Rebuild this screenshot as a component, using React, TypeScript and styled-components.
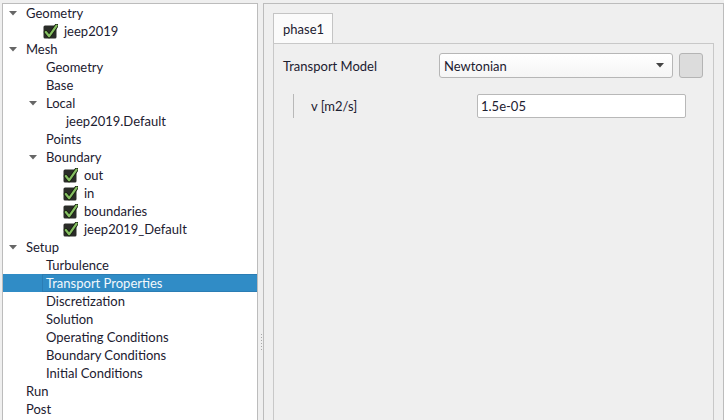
import React from "react";
import styled, { createGlobalStyle } from "styled-components";

const GlobalStyle = createGlobalStyle`
  html, body {
    margin: 0;
    padding: 0;
    background: #efefef;
    overflow: hidden;
  }
  body {
    font-family: Lato, "Noto Sans", "DejaVu Sans", sans-serif;
    font-size: 13px;
    color: #1c2030;
  }
`;

const Window = styled.div`
  display: flex;
  width: 724px;
  height: 420px;
  overflow: hidden;
`;

const TreePanel = styled.div`
  width: 256px;
  height: 430px;
  margin: 3px 0 0 2px;
  box-sizing: border-box;
  border: 1px solid #bcbcbc;
  background: #ffffff;
  flex-shrink: 0;
`;

const Row = styled.div<{ $level: number; $selected?: boolean }>`
  display: flex;
  align-items: center;
  height: 18px;
  padding-left: ${(p) => p.$level * 20}px;
  background: ${(p) => (p.$selected ? "#308cc6" : "transparent")};
  color: ${(p) => (p.$selected ? "#f2f8fc" : "inherit")};
  white-space: nowrap;
`;

const ArrowCell = styled.div`
  width: 20px;
  height: 18px;
  display: flex;
  align-items: center;
  justify-content: center;
  flex-shrink: 0;
`;

const ItemCell = styled.div<{ $selected?: boolean; $check?: boolean }>`
  flex: 1;
  height: 18px;
  box-sizing: border-box;
  display: flex;
  align-items: center;
  padding-left: ${(p) => (p.$check ? 0 : 3)}px;
  border: 1px solid ${(p) => (p.$selected ? "#2b7db4" : "transparent")};
  border-right: none;
  margin-left: -1px;
`;

const CheckBox = styled.span`
  display: inline-flex;
  width: 15px;
  height: 15px;
  margin: 0 6px 0 0;
`;

const Splitter = styled.div`
  width: 5px;
  flex-shrink: 0;
  display: flex;
  flex-direction: column;
  align-items: center;
  gap: 2px;
  padding-top: 334px;
  box-sizing: border-box;
`;

const Dot = styled.span`
  width: 1px;
  height: 1px;
  background: #a8a8a8;
  margin-left: 1px;
`;

const Frame = styled.div`
  flex: 1;
  height: 430px;
  margin-top: 3px;
  box-sizing: border-box;
  border: 1px solid #bcbcbc;
  padding: 9px 9px 0 9px;
  display: flex;
  flex-direction: column;
`;

const TabBar = styled.div`
  display: flex;
  height: 30px;
`;

const Tab = styled.div`
  width: 60px;
  box-sizing: border-box;
  border: 1px solid #c4c4c4;
  border-bottom: none;
  background: #fbfbfb;
  display: flex;
  align-items: center;
  padding-left: 9px;
`;

const Pane = styled.div`
  flex: 1;
  border: 1px solid #c8c8c8;
  padding: 9px 9px 0 9px;
  display: flex;
  flex-direction: column;
  gap: 16px;
`;

const FieldRow = styled.div`
  display: flex;
  align-items: center;
  height: 25px;
`;

const Label = styled.div<{ $width: number }>`
  width: ${(p) => p.$width}px;
  flex-shrink: 0;
`;

const Combo = styled.div`
  width: 234px;
  height: 25px;
  box-sizing: border-box;
  border: 1px solid #b6b6b6;
  border-radius: 3px;
  background: linear-gradient(#ffffff, #f5f5f5);
  display: flex;
  align-items: center;
  justify-content: space-between;
  padding: 0 8px 0 4px;
`;

const SquareButton = styled.div`
  width: 24px;
  height: 25px;
  margin-left: 6px;
  box-sizing: border-box;
  border: 1px solid #b4b4b4;
  border-radius: 3px;
  background: #dcdcdc;
`;

const SubGroup = styled.div`
  display: flex;
  align-items: center;
  height: 24px;
  margin-left: 10px;
  border-left: 1px solid #b8b8b8;
  padding-left: 17px;
`;

const Input = styled.div`
  width: 209px;
  height: 24px;
  box-sizing: border-box;
  border: 1px solid #b8b8b8;
  border-radius: 2px;
  background: #ffffff;
  display: flex;
  align-items: center;
  padding-left: 3px;
`;

const DownArrow = ({ color = "#5a5a5a" }: { color?: string }) => (
  <svg width="8" height="5" viewBox="0 0 8 5">
    <path d="M0 0 L8 0 L4 4.5 Z" fill={color} />
  </svg>
);

const CheckIcon = () => (
  <svg width="15" height="15" viewBox="0 0 15 15">
    <rect x="0.5" y="1.5" width="13" height="13" rx="1.5" fill="#2a2c28" />
    <path d="M2.8 8 L6.2 12.2 L13.6 1.6" fill="none" stroke="#17210f" strokeWidth="4" strokeLinecap="round" strokeLinejoin="round" />
    <path d="M2.8 8 L6.2 12.2 L13.6 1.6" fill="none" stroke="#86c062" strokeWidth="2.2" strokeLinecap="round" strokeLinejoin="round" />
  </svg>
);

type Node = {
  label: string;
  level: number;
  expanded?: boolean;
  checked?: boolean;
  selected?: boolean;
};

const nodes: Node[] = [
  { label: "Geometry", level: 0, expanded: true },
  { label: "jeep2019", level: 1, checked: true },
  { label: "Mesh", level: 0, expanded: true },
  { label: "Geometry", level: 1 },
  { label: "Base", level: 1 },
  { label: "Local", level: 1, expanded: true },
  { label: "jeep2019.Default", level: 2 },
  { label: "Points", level: 1 },
  { label: "Boundary", level: 1, expanded: true },
  { label: "out", level: 2, checked: true },
  { label: "in", level: 2, checked: true },
  { label: "boundaries", level: 2, checked: true },
  { label: "jeep2019_Default", level: 2, checked: true },
  { label: "Setup", level: 0, expanded: true },
  { label: "Turbulence", level: 1 },
  { label: "Transport Properties", level: 1, selected: true },
  { label: "Discretization", level: 1 },
  { label: "Solution", level: 1 },
  { label: "Operating Conditions", level: 1 },
  { label: "Boundary Conditions", level: 1 },
  { label: "Initial Conditions", level: 1 },
  { label: "Run", level: 0 },
  { label: "Post", level: 0 },
];

export default function App() {
  return (
    <>
      <GlobalStyle />
      <Window>
        <TreePanel>
          {nodes.map((n, i) => (
            <Row key={i} $level={n.level} $selected={n.selected}>
              <ArrowCell>{n.expanded && <DownArrow color="#666" />}</ArrowCell>
              <ItemCell $selected={n.selected} $check={n.checked}>
                {n.checked && (
                  <CheckBox>
                    <CheckIcon />
                  </CheckBox>
                )}
                {n.label}
              </ItemCell>
            </Row>
          ))}
        </TreePanel>
        <Splitter>
          {[0, 1, 2, 3, 4, 5].map((d) => (
            <Dot key={d} />
          ))}
        </Splitter>
        <Frame>
          <TabBar>
            <Tab>phase1</Tab>
          </TabBar>
          <Pane>
            <FieldRow>
              <Label $width={156}>Transport Model</Label>
              <Combo>
                <span>Newtonian</span>
                <DownArrow color="#444" />
              </Combo>
              <SquareButton />
            </FieldRow>
            <SubGroup>
              <Label $width={166}>v [m2/s]</Label>
              <Input>1.5e-05</Input>
            </SubGroup>
          </Pane>
        </Frame>
      </Window>
    </>
  );
}
